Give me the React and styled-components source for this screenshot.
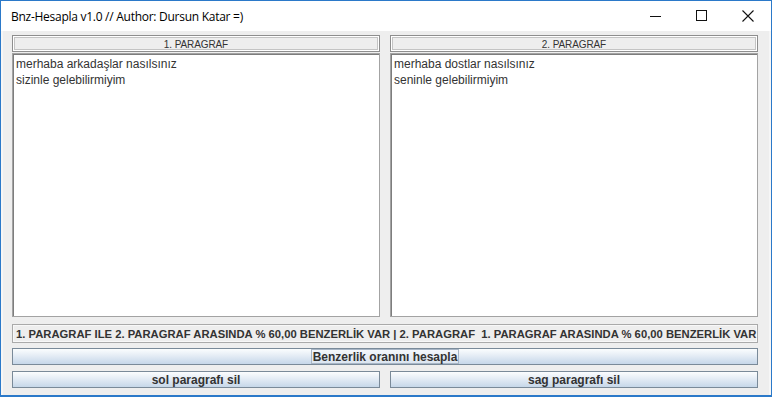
import React from 'react';
import styled, { createGlobalStyle } from 'styled-components';

const GlobalStyle = createGlobalStyle`
  html, body { margin: 0; padding: 0; background: #ffffff; }
  * { box-sizing: border-box; }
`;

const RESULT =
  '1. PARAGRAF ILE 2. PARAGRAF ARASINDA % 60,00 BENZERLİK VAR | 2. PARAGRAF  1. PARAGRAF ARASINDA % 60,00 BENZERLİK VAR';

export default function App() {
  return (
    <>
      <GlobalStyle />
      <Window>
        <TitleBar>
          <Title>Bnz-Hesapla v1.0 // Author: Dursun Katar =)</Title>
          <Controls>
            <Control>
              <svg width="12" height="12" viewBox="0 0 12 12">
                <path d="M0 6.5h11" stroke="#111" strokeWidth="1" />
              </svg>
            </Control>
            <Control>
              <svg width="12" height="12" viewBox="0 0 12 12">
                <rect x="0.5" y="0.5" width="10" height="10" fill="none" stroke="#111" strokeWidth="1" />
              </svg>
            </Control>
            <Control>
              <svg width="12" height="12" viewBox="0 0 12 12">
                <path d="M0.5 0.5l11 11M11.5 0.5l-11 11" stroke="#111" strokeWidth="1.1" />
              </svg>
            </Control>
          </Controls>
        </TitleBar>

        <Content>
          <Columns>
            <Column>
              <Header>1. PARAGRAF</Header>
              <Editor defaultValue={'merhaba arkadaşlar nasılsınız\nsizinle gelebilirmiyim'} spellCheck={false} />
            </Column>
            <Column>
              <Header>2. PARAGRAF</Header>
              <Editor defaultValue={'merhaba dostlar nasılsınız\nseninle gelebilirmiyim'} spellCheck={false} />
            </Column>
          </Columns>

          <Result>{RESULT}</Result>

          <Button>
            <Focus>Benzerlik oranını hesapla</Focus>
          </Button>

          <ButtonRow>
            <Button>sol paragrafı sil</Button>
            <Button>sag paragrafı sil</Button>
          </ButtonRow>
        </Content>
      </Window>
    </>
  );
}

const Window = styled.div`
  width: 772px;
  height: 397px;
  display: flex;
  flex-direction: column;
  border: 1px solid #2b79c9;
  border-bottom-width: 2px;
  background: #eeeeee;
  overflow: hidden;
`;

const TitleBar = styled.div`
  height: 30px;
  flex: none;
  display: flex;
  align-items: center;
  justify-content: space-between;
  background: #ffffff;
  padding-left: 10px;
`;

const Title = styled.div`
  font-family: 'Open Sans', 'Noto Sans', sans-serif;
  font-size: 12px;
  color: #000;
  letter-spacing: -0.27px;
`;

const Controls = styled.div`
  display: flex;
  height: 100%;
`;

const Control = styled.div`
  width: 46px;
  height: 100%;
  display: flex;
  align-items: center;
  justify-content: center;
  svg { display: block; }
`;

const Content = styled.div`
  flex: 1;
  display: flex;
  flex-direction: column;
  gap: 6px;
  padding: 4px 13px 0 11px;
  box-shadow: inset 2px 0 0 #f6f6f6, inset -2px 0 0 #f6f6f6;
`;

const Columns = styled.div`
  display: grid;
  grid-template-columns: 368px 368px;
  column-gap: 10px;
`;

const Column = styled.div`
  display: flex;
  flex-direction: column;
  gap: 1px;
`;

const Header = styled.div`
  height: 17px;
  border: 1px solid #8e8e8e;
  box-shadow: inset 0 0 0 1px #ffffff, inset 0 0 0 2px #c4c4c4;
  background: #eeeeee;
  font-family: 'Liberation Sans', Arial, sans-serif;
  font-size: 10px;
  letter-spacing: -0.1px;
  color: #333;
  display: flex;
  align-items: center;
  justify-content: center;
  padding-top: 1px;
`;

const Editor = styled.textarea`
  height: 264px;
  resize: none;
  margin: 0;
  border: 1px solid #a3a3a3;
  box-shadow: inset 1px 1px 0 #7d7d7d;
  background: #ffffff;
  font-family: 'Liberation Sans', Arial, sans-serif;
  font-size: 12px;
  line-height: 16px;
  color: #333;
  padding: 2px 3px;
  outline: none;
  overflow: hidden;
`;

const Result = styled.div`
  height: 19px;
  margin: 1px 0 -1px;
  border: 1px solid #aaaaaa;
  box-shadow: inset 0 0 0 1px #f8f8f8;
  font-family: 'Liberation Sans', Arial, sans-serif;
  font-weight: bold;
  font-size: 11.25px;
  color: #333;
  white-space: pre;
  overflow: hidden;
  display: flex;
  align-items: center;
  padding-left: 3px;
`;

const Button = styled.div`
  height: 17px;
  border: 1px solid #7a8a99;
  background: linear-gradient(to bottom, #fbfdfe 0%, #e4ecf5 45%, #c6d7e9 100%);
  font-family: 'Liberation Sans', Arial, sans-serif;
  font-weight: bold;
  font-size: 12px;
  color: #333;
  display: flex;
  align-items: center;
  justify-content: center;
  white-space: nowrap;
`;

const Focus = styled.span`
  height: 15px;
  display: flex;
  align-items: center;
  padding: 0 1px;
  border: 1px solid #a8b6c6;
  background: linear-gradient(to bottom, #f4f7fb 0%, #dbe5f0 100%);
`;

const ButtonRow = styled.div`
  display: grid;
  grid-template-columns: 368px 368px;
  column-gap: 10px;
`;
